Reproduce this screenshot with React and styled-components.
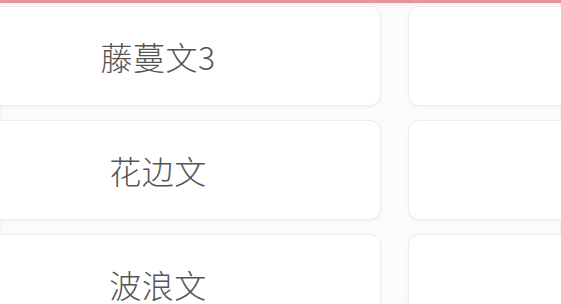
import React from 'react';
import styled, { createGlobalStyle } from 'styled-components';

const GlobalStyle = createGlobalStyle`
  html, body {
    margin: 0;
    padding: 0;
    background: #fbfbfb;
    overflow: hidden;
  }
  body {
    font-family: "Noto Sans CJK SC", "Noto Sans", sans-serif;
  }
`;

const Page = styled.div`
  width: 561px;
  height: 304px;
  overflow: hidden;
  border-top: 3px solid #e2979a;
  box-shadow: inset 0 1px 3px rgba(228, 154, 156, 0.25);
  box-sizing: border-box;
`;

const Grid = styled.div`
  display: grid;
  grid-template-columns: 446px 446px;
  column-gap: 27px;
  row-gap: 14px;
  margin-left: -65px;
  padding-top: 3px;
`;

const Card = styled.div`
  height: 100px;
  box-sizing: border-box;
  background: #ffffff;
  border: 1px solid #ededed;
  border-radius: 11px;
  box-shadow: 0 1px 3px rgba(0, 0, 0, 0.05);
  display: flex;
  align-items: center;
  justify-content: center;
  font-size: 32px;
  font-weight: 300;
  color: #555555;
  letter-spacing: 0.5px;
`;

const items = [
  ['藤蔓文3', ''],
  ['花边文', ''],
  ['波浪文', ''],
];

export default function App() {
  return (
    <>
      <GlobalStyle />
      <Page>
        <Grid>
          {items.map(([left, right], i) => (
            <React.Fragment key={i}>
              <Card>{left}</Card>
              <Card>{right}</Card>
            </React.Fragment>
          ))}
        </Grid>
      </Page>
    </>
  );
}
